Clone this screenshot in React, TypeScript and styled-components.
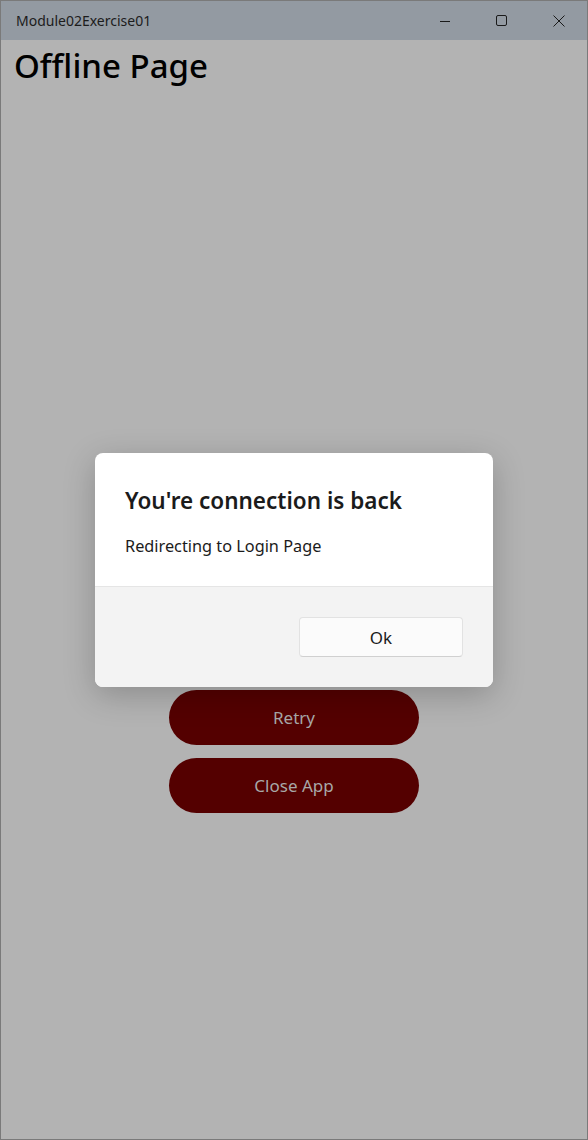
import styled, { createGlobalStyle } from 'styled-components';

const GlobalStyle = createGlobalStyle`
  html, body {
    margin: 0;
    padding: 0;
    background: #b3b3b3;
  }
  * {
    box-sizing: border-box;
  }
`;

const FONT = `"Noto Sans", "Open Sans", sans-serif`;

const Window = styled.div`
  position: relative;
  width: 588px;
  height: 1140px;
  border: 1px solid #7a7a7a;
  background: #b3b3b3;
  display: flex;
  flex-direction: column;
  font-family: ${FONT};
  overflow: hidden;
`;

const TitleBar = styled.div`
  height: 39px;
  background: #939aa2;
  display: flex;
  align-items: center;
  justify-content: space-between;
  padding-left: 15px;
`;

const TitleText = styled.span`
  font-size: 14px;
  color: #1c1c1c;
`;

const Controls = styled.div`
  display: flex;
  height: 100%;
`;

const ControlBtn = styled.div`
  width: 57px;
  height: 100%;
  display: flex;
  align-items: center;
  justify-content: center;
  color: #1a1a1a;
`;

const Content = styled.main`
  flex: 1;
  display: flex;
  flex-direction: column;
  padding: 4px 13px;
`;

const Heading = styled.h1`
  margin: 0;
  font-size: 33px;
  font-weight: 500;
  color: #000;
  line-height: 44px;
`;

const Actions = styled.div`
  margin-top: 602px;
  display: flex;
  flex-direction: column;
  align-items: center;
  gap: 13px;
`;

const PillButton = styled.button`
  width: 250px;
  height: 55px;
  border: none;
  border-radius: 28px;
  background: #540000;
  color: #a8a8a8;
  font-family: ${FONT};
  font-size: 17px;
`;

const Dialog = styled.div`
  position: absolute;
  left: 94px;
  top: 452px;
  width: 398px;
  height: 234px;
  border-radius: 8px;
  background: #ffffff;
  overflow: hidden;
  box-shadow: 0 8px 32px rgba(0, 0, 0, 0.22);
  display: flex;
  flex-direction: column;
`;

const DialogBody = styled.div`
  height: 133px;
  padding: 32px 30px 0;
`;

const DialogTitle = styled.h2`
  margin: 0;
  font-size: 22.5px;
  font-weight: 600;
  color: #1b1b1b;
  line-height: 32px;
`;

const DialogText = styled.p`
  margin: 18px 0 0;
  font-size: 16.3px;
  color: #1b1b1b;
`;

const DialogFooter = styled.div`
  flex: 1;
  background: #f3f3f3;
  border-top: 1px solid #e5e5e5;
  display: flex;
  justify-content: flex-end;
  align-items: flex-start;
  padding: 30px 30px 0;
`;

const OkButton = styled.button`
  width: 164px;
  height: 40px;
  background: #fbfbfb;
  border: 1px solid #e2e2e2;
  border-bottom-color: #d0d0d0;
  border-radius: 4px;
  font-family: ${FONT};
  font-size: 17px;
  color: #1b1b1b;
`;

const App = () => {
  return (
    <>
      <GlobalStyle />
      <Window>
        <TitleBar>
          <TitleText>Module02Exercise01</TitleText>
          <Controls>
            <ControlBtn>
              <svg width="10" height="10" viewBox="0 0 10 10">
                <path d="M0 5.5h10" stroke="currentColor" strokeWidth="1" />
              </svg>
            </ControlBtn>
            <ControlBtn>
              <svg width="11" height="11" viewBox="0 0 11 11">
                <rect x="0.5" y="0.5" width="10" height="10" rx="1.5" fill="none" stroke="currentColor" strokeWidth="1" />
              </svg>
            </ControlBtn>
            <ControlBtn>
              <svg width="12" height="12" viewBox="0 0 12 12">
                <path d="M0.5 0.5l11 11M11.5 0.5l-11 11" stroke="currentColor" strokeWidth="1" />
              </svg>
            </ControlBtn>
          </Controls>
        </TitleBar>
        <Content>
          <Heading>Offline Page</Heading>
          <Actions>
            <PillButton>Retry</PillButton>
            <PillButton>Close App</PillButton>
          </Actions>
        </Content>
        <Dialog>
          <DialogBody>
            <DialogTitle>You're connection is back</DialogTitle>
            <DialogText>Redirecting to Login Page</DialogText>
          </DialogBody>
          <DialogFooter>
            <OkButton>Ok</OkButton>
          </DialogFooter>
        </Dialog>
      </Window>
    </>
  );
};

export default App;
